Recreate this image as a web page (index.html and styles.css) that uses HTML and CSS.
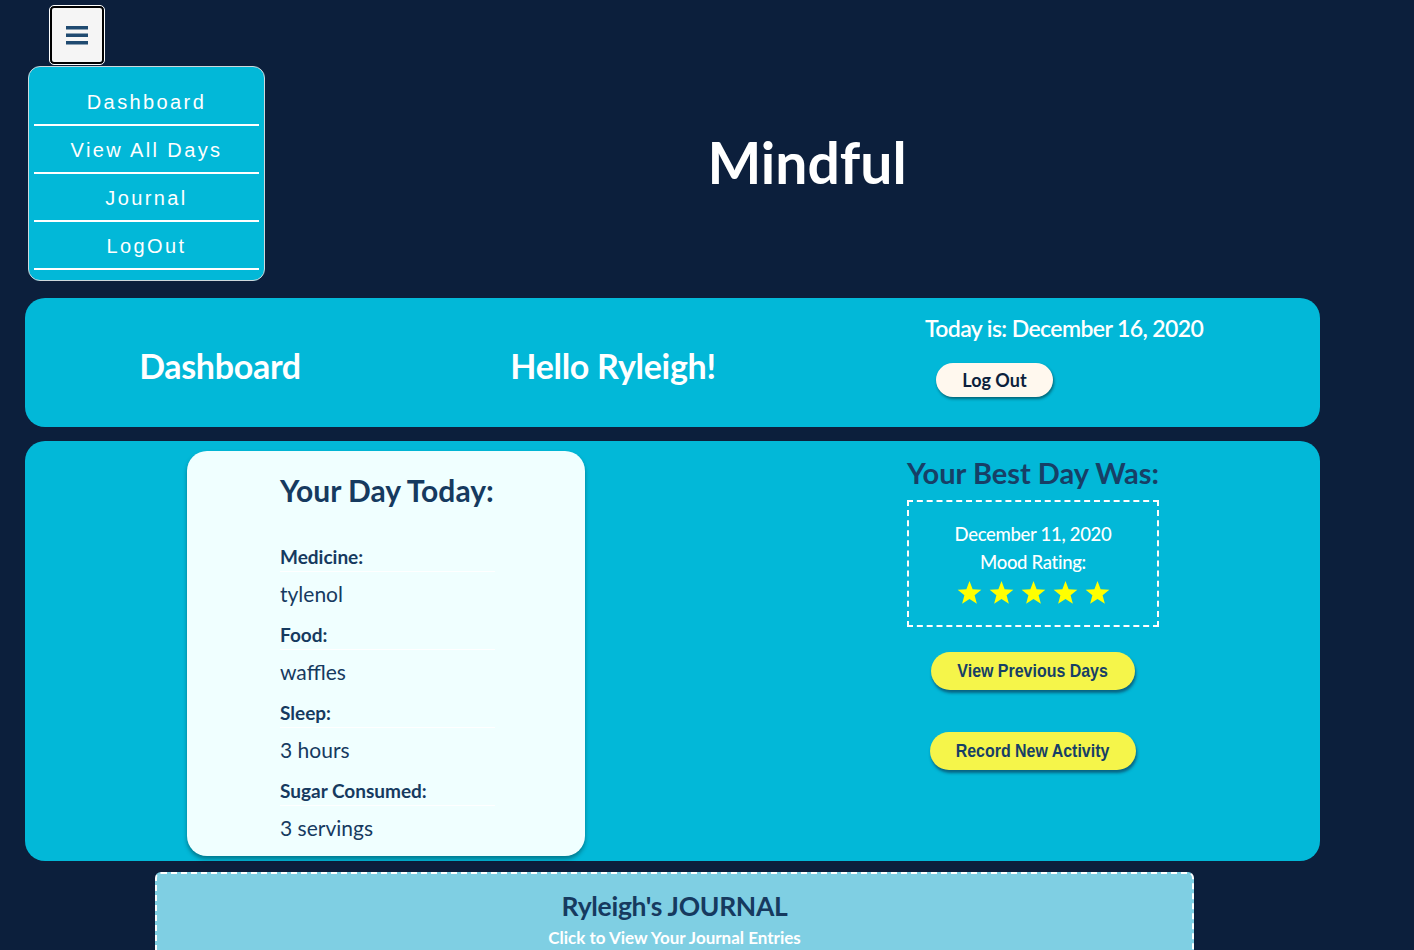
FILE: index.html
```html
<!DOCTYPE html>
<html lang="en">
<head>
<meta charset="utf-8">
<title>Mindful</title>
<link rel="stylesheet" href="styles.css">
</head>
<body>
<header class="top">
  <nav class="nav">
    <button class="burger" aria-label="menu">
      <svg width="22" height="22" viewBox="0 0 22 22"><rect x="0" y="2" width="22" height="3.5" fill="#1f4a70"/><rect x="0" y="9.5" width="22" height="3.5" fill="#1f4a70"/><rect x="0" y="17" width="22" height="3.5" fill="#1f4a70"/></svg>
    </button>
    <ul class="menu">
      <li>Dashboard</li>
      <li>View All Days</li>
      <li>Journal</li>
      <li>LogOut</li>
    </ul>
  </nav>
  <h1 class="brand">Mindful</h1>
</header>

<section class="card head">
  <h2 class="head-title">Dashboard</h2>
  <h2 class="head-title">Hello Ryleigh!</h2>
  <div class="today">
    <p class="today-text">Today is: December 16, 2020</p>
    <button class="logout">Log Out</button>
  </div>
</section>

<section class="card main">
  <div class="day">
    <h3 class="day-title">Your Day Today:</h3>
    <dl class="facts">
      <dt>Medicine:</dt><dd>tylenol</dd>
      <dt>Food:</dt><dd>waffles</dd>
      <dt>Sleep:</dt><dd>3 hours</dd>
      <dt>Sugar Consumed:</dt><dd>3 servings</dd>
    </dl>
  </div>
  <div class="best">
    <h3 class="best-title">Your Best Day Was:</h3>
    <div class="best-box">
      <p>December 11, 2020</p>
      <p>Mood Rating:</p>
      <div class="stars">
        <svg class="star" viewBox="0 0 24 24"><polygon points="12,1 15,8.8 23.4,9.3 16.9,14.6 19.1,22.8 12,18.2 4.9,22.8 7.1,14.6 0.6,9.3 9,8.8" fill="#ffff00"/></svg>
        <svg class="star" viewBox="0 0 24 24"><polygon points="12,1 15,8.8 23.4,9.3 16.9,14.6 19.1,22.8 12,18.2 4.9,22.8 7.1,14.6 0.6,9.3 9,8.8" fill="#ffff00"/></svg>
        <svg class="star" viewBox="0 0 24 24"><polygon points="12,1 15,8.8 23.4,9.3 16.9,14.6 19.1,22.8 12,18.2 4.9,22.8 7.1,14.6 0.6,9.3 9,8.8" fill="#ffff00"/></svg>
        <svg class="star" viewBox="0 0 24 24"><polygon points="12,1 15,8.8 23.4,9.3 16.9,14.6 19.1,22.8 12,18.2 4.9,22.8 7.1,14.6 0.6,9.3 9,8.8" fill="#ffff00"/></svg>
        <svg class="star" viewBox="0 0 24 24"><polygon points="12,1 15,8.8 23.4,9.3 16.9,14.6 19.1,22.8 12,18.2 4.9,22.8 7.1,14.6 0.6,9.3 9,8.8" fill="#ffff00"/></svg>
      </div>
    </div>
    <button class="pill"><span class="pill-text">View Previous Days</span></button>
    <button class="pill pill-second"><span class="pill-text">Record New Activity</span></button>
  </div>
</section>

<section class="journal">
  <h3 class="journal-title">Ryleigh's JOURNAL</h3>
  <p class="journal-sub">Click to View Your Journal Entries</p>
</section>
</body>
</html>
```
FILE: styles.css
```css
* { box-sizing: border-box; }
body {
  margin: 0;
  background: #0c1f3c;
  font-family: Lato, "Open Sans", sans-serif;
  overflow: hidden;
  height: 950px;
}
h1, h2, h3, p, ul, dl, dd { margin: 0; padding: 0; }

.top {
  display: flex;
  height: 298px;
  padding: 6px 65px 0 28px;
}
.nav { width: 237px; display: flex; flex-direction: column; }
.burger {
  margin-left: 22px;
  width: 54px;
  height: 58px;
  background: #f5f5f5;
  border: 2px solid #000;
  outline: 1px solid #fff;
  border-radius: 4px;
  display: flex;
  align-items: center;
  justify-content: center;
  padding: 0;
}
.menu {
  list-style: none;
  margin-top: 2px;
  background: #02b8d8;
  border: 1px solid #cfd8dc;
  border-radius: 12px;
  padding: 11px 5px 10px 5px;
}
.menu li {
  height: 48px;
  padding-top: 2px;
  border-bottom: 2px solid #fff;
  display: flex;
  align-items: center;
  justify-content: center;
  color: #fff;
  font-family: "Liberation Sans", Arial, sans-serif;
  font-size: 20px;
  letter-spacing: 2.4px;
}
.brand {
  flex: 1;
  text-align: center;
  color: #fff;
  font-size: 57px;
  font-weight: 700;
  padding-top: 128px;
  line-height: 1;
}

.card {
  background: #02b8d8;
  border-radius: 20px;
  width: 1295px;
  margin-left: 25px;
}
.head {
  height: 129px;
  display: grid;
  grid-template-columns: 390px 396px 1fr;
  align-items: center;
  padding-top: 6px;
}
.head-title {
  text-align: center;
  color: #fff;
  font-size: 34px;
  font-weight: 700;
  letter-spacing: -0.3px;
}
.today {
  align-self: start;
  padding: 9px 0 0 114px;
}
.today-text {
  color: #fff;
  font-size: 23px;
  font-weight: 600;
  line-height: 30px;
  letter-spacing: -0.6px;
}
.logout {
  margin: 20px 0 0 11px;
  width: 117px;
  height: 34px;
  border: none;
  border-radius: 17px;
  background: #fff8ee;
  box-shadow: 1px 2px 3px rgba(0, 0, 0, 0.45);
  color: #0c1f3c;
  font-family: Lato, sans-serif;
  font-size: 18px;
  font-weight: 700;
}

.main {
  margin-top: 14px;
  height: 420px;
  display: grid;
  grid-template-columns: 398px 1fr;
  grid-template-rows: 405px;
  column-gap: 161px;
  padding: 10px 0 5px 162px;
}
.day {
  background: #f0ffff;
  border-radius: 20px;
  box-shadow: 0 3px 4px rgba(0, 0, 0, 0.35);
  padding: 21px 0 0 93px;
  color: #163a5f;
  overflow: hidden;
}
.day-title {
  font-size: 30px;
  font-weight: 700;
  line-height: 36px;
}
.facts { margin-top: 36px; width: 215px; }
.facts dt {
  font-size: 19px;
  font-weight: 700;
  line-height: 26px;
  padding-bottom: 1px;
  border-bottom: 1px solid #ffffff;
}
.facts dd {
  font-size: 21px;
  line-height: 28px;
  padding: 8px 0 14px;
}

.best {
  display: flex;
  flex-direction: column;
  align-items: center;
  padding-top: 4px;
}
.best-title {
  color: #173f66;
  font-size: 29px;
  font-weight: 700;
  line-height: 36px;
}
.best-box {
  margin-top: 9px;
  width: 252px;
  height: 127px;
  border: 2px dashed #fff;
  color: #fff;
  text-align: center;
  padding-top: 18px;
  font-size: 18.5px;
  line-height: 28px;
  font-weight: 500;
  letter-spacing: -0.3px;
}
.stars {
  display: flex;
  justify-content: center;
  gap: 7px;
  margin-top: 4px;
}
.star { width: 25px; height: 25px; display: block; }
.pill {
  width: 204px;
  height: 38px;
  border: none;
  border-radius: 19px;
  background: #f5f54a;
  box-shadow: 1px 3px 3px rgba(12, 31, 60, 0.55);
  color: #173f66;
  font-family: "Liberation Sans", Arial, sans-serif;
  font-size: 19px;
  font-weight: 700;
  margin-top: 25px;
  padding: 0;
  white-space: nowrap;
}
.pill-text { display: inline-block; transform: scaleX(0.84); }
.pill-second { margin-top: 42px; width: 206px; }

.journal {
  margin: 11px 0 0 155px;
  width: 1039px;
  height: 90px;
  background: #7fcfe3;
  border: 2px dashed #fff;
  border-radius: 6px;
  text-align: center;
  padding-top: 15px;
}
.journal-title {
  color: #163a5f;
  font-size: 26.5px;
  font-weight: 700;
  line-height: 34px;
  letter-spacing: -0.3px;
}
.journal-sub {
  color: #fff;
  font-size: 17px;
  font-weight: 700;
  line-height: 20px;
  margin-top: 5px;
}
```
